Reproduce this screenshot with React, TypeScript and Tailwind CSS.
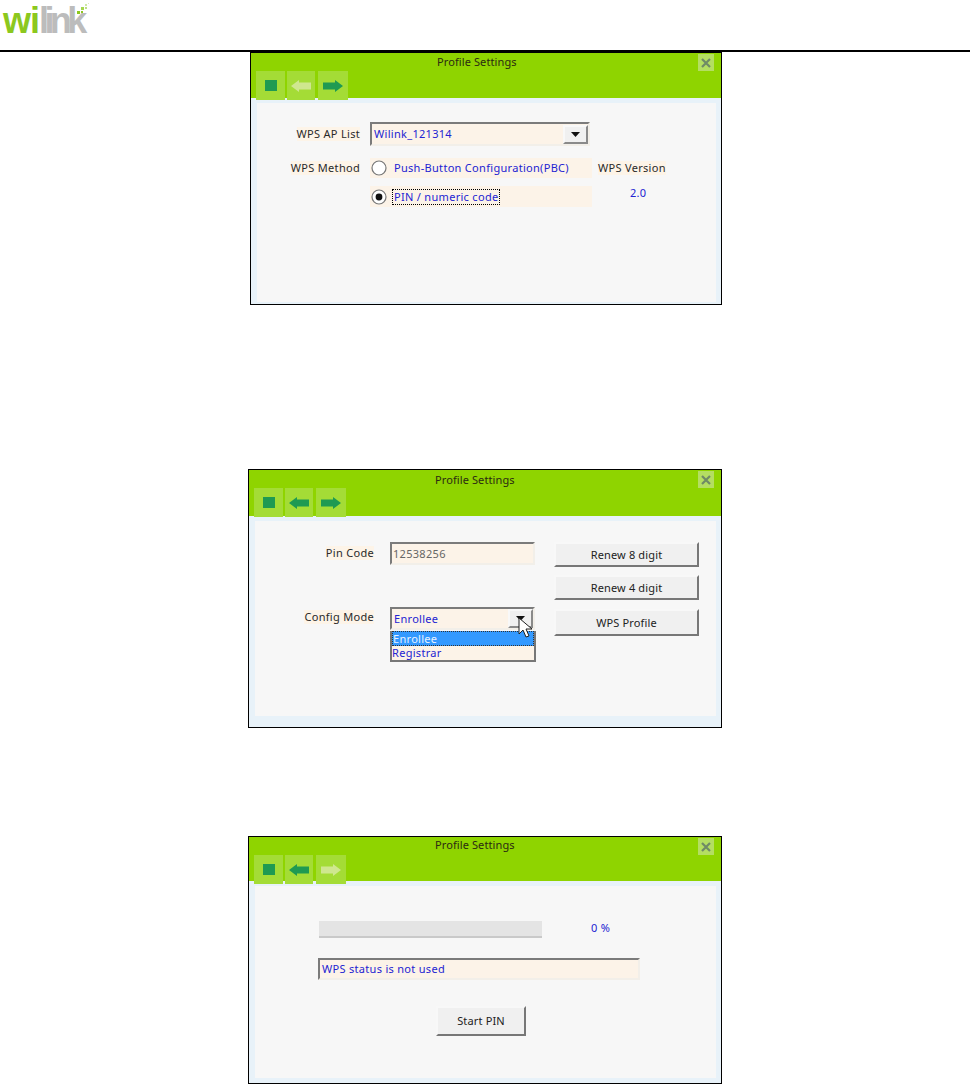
import type { ReactNode } from 'react';

const FONT = "font-['Noto_Sans',sans-serif] text-[11px] leading-[14px] tracking-[0.3px]";
const BLUE = 'text-[#2323d2]';
const GREEN_ON = '#1f9a52';
const GREEN_OFF = '#cfe78f';

function Logo() {
  return (
    <div className="relative h-[50px] w-[100px] pl-[3px]">
      <div className="font-['Liberation_Sans',sans-serif] text-[36px] font-bold leading-[42px]">
        <span className="tracking-[-1px] text-[#8cc81e]">wi</span>
        <span className="tracking-[-4.6px] text-[#bcbcbc]">link</span>
      </div>
      <svg className="absolute left-[74px] top-[2px]" width="16" height="14" viewBox="0 0 16 14">
        <rect x="3" y="9" width="3" height="3" fill="#8cc81e" />
        <rect x="7" y="9" width="2" height="2" fill="#8cc81e" />
        <rect x="7" y="5" width="3" height="3" fill="#a5d74e" />
        <rect x="11" y="5" width="2" height="2" fill="#bcdf83" />
        <rect x="11" y="2" width="2" height="2" fill="#cfe8a5" />
        <rect x="14" y="1" width="1" height="1" fill="#dcefc0" />
      </svg>
    </div>
  );
}

function ToolButton({ children, className = 'w-[29px]' }: { children: ReactNode; className?: string }) {
  return <div className={`flex h-[29px] items-center justify-center bg-[#a4dc36] ${className}`}>{children}</div>;
}

function Arrow({ dir, on }: { dir: 'left' | 'right'; on: boolean }) {
  const d = dir === 'left' ? 'M0 6 L8 0 V2.5 H20 V9.5 H8 V12 Z' : 'M20 6 L12 0 V2.5 H0 V9.5 H12 V12 Z';
  return (
    <svg width="20" height="12" viewBox="0 0 20 12">
      <path d={d} fill={on ? GREEN_ON : GREEN_OFF} />
    </svg>
  );
}

function Window({
  className,
  head,
  titleTop,
  back,
  next,
  bottom,
  children,
}: {
  className: string;
  head: string;
  titleTop: string;
  back: boolean;
  next: boolean;
  bottom: string;
  children: ReactNode;
}) {
  return (
    <div className={`flex flex-col border border-black bg-[#e8f2f9] ${FONT} ${className}`}>
      <div className={`flex shrink-0 flex-col justify-between bg-[#8fd400] ${head}`}>
        <div className="flex items-start">
          <div className={`ml-[186px] tracking-[0.1px] text-[#2b2b12] ${titleTop}`}>Profile Settings</div>
          <div className="ml-auto mr-[7px] mt-[1px] flex h-[17px] w-[16px] items-center justify-center bg-[#b4de62]">
            <svg width="10" height="10" viewBox="0 0 10 10">
              <path d="M1 1 L9 9 M9 1 L1 9" stroke="#6f8a66" strokeWidth="2.2" />
            </svg>
          </div>
        </div>
        <div className="ml-[5px] flex gap-[2px]">
          <ToolButton>
            <div className="h-[11px] w-[12px] bg-[#1f9a52]" />
          </ToolButton>
          <ToolButton className="w-[28px]">
            <Arrow dir="left" on={back} />
          </ToolButton>
          <ToolButton className="ml-[1px] w-[30px]">
            <Arrow dir="right" on={next} />
          </ToolButton>
        </div>
      </div>
      <div className={`flex min-h-0 flex-1 flex-col pl-[6px] pr-[5px] pt-[5px] ${bottom}`}>
        <div className="relative flex-1 bg-[#f7f7f7]">{children}</div>
      </div>
    </div>
  );
}

function Label({ children, width }: { children: ReactNode; width: string }) {
  return (
    <div className={`flex shrink-0 justify-end ${width}`}>
      <span className="bg-[#fdf4e8] text-[#2a2a2a]">{children}</span>
    </div>
  );
}

function Sunken({ children, className }: { children?: ReactNode; className: string }) {
  return (
    <div className={`flex items-center border-2 border-[#f2efe9] border-l-[#7b7b7b] border-t-[#7b7b7b] bg-[#fcf3e8] ${className}`}>
      {children}
    </div>
  );
}

function Raised({ children, className }: { children: ReactNode; className: string }) {
  return (
    <div className={`flex items-center justify-center border-2 border-[#f8f8f8] border-b-[#777777] border-r-[#777777] bg-[#f0f0f0] tracking-[0.15px] text-[#222222] ${className}`}>
      {children}
    </div>
  );
}

function Combo({ value, className }: { value: string; className: string }) {
  return (
    <Sunken className={`justify-between pl-[2px] ${BLUE} ${className}`}>
      <span>{value}</span>
      <div className="flex h-[19px] w-[25px] items-center justify-center border-2 border-[#f8f8f8] border-b-[#8a8a8a] border-r-[#8a8a8a] bg-[#f0f0f0]">
        <svg width="9" height="5" viewBox="0 0 9 5">
          <path d="M0 0 H9 L4.5 5 Z" fill="#111111" />
        </svg>
      </div>
    </Sunken>
  );
}

function Radio({ checked }: { checked: boolean }) {
  return (
    <svg className="shrink-0" width="16" height="16" viewBox="0 0 16 16">
      <circle cx="8" cy="8" r="7" fill="#ffffff" stroke="#777777" strokeWidth="1.2" />
      {checked && <circle cx="8" cy="8" r="3.4" fill="#111111" />}
    </svg>
  );
}

function Cursor() {
  return (
    <svg className="absolute left-[263px] top-[96px]" width="16" height="22" viewBox="0 0 16 22">
      <path d="M1 1 V17 L5 13 L8 20 L11 19 L8 12 L14 12 Z" fill="#ffffff" stroke="#222222" strokeWidth="1" />
    </svg>
  );
}

export default function App() {
  return (
    <div className="h-[1084px] w-[970px] overflow-hidden bg-white">
      <Logo />
      <div className="h-[2px] bg-black" />

      <Window className="ml-[250px] h-[253px] w-[472px]" head="h-[45px]" titleTop="mt-[2px]" back={false} next={true} bottom="pb-[2px]">
        <div className="flex items-center pt-[19px]">
          <Label width="w-[103px]">WPS AP List</Label>
          <Combo value="Wilink_121314" className="ml-[10px] h-[24px] w-[220px]" />
        </div>
        <div className="mt-[12px] flex h-[20px] items-center">
          <Label width="w-[103px]">WPS Method</Label>
          <div className={`ml-[10px] flex h-[20px] w-[222px] items-center bg-[#fcf3e8] pl-[1px] ${BLUE}`}>
            <Radio checked={false} />
            <span className="ml-[7px]">Push-Button Configuration(PBC)</span>
          </div>
          <span className="ml-[6px] bg-[#fdf4e8] text-[#2a2a2a]">WPS Version</span>
        </div>
        <div className="mt-[8px] flex h-[21px] items-start pl-[113px]">
          <div className={`flex h-[21px] w-[222px] items-center bg-[#fcf3e8] pl-[1px] ${BLUE}`}>
            <Radio checked={true} />
            <span className="ml-[5px] border border-dotted border-black px-[1px]">PIN / numeric code</span>
          </div>
          <span className={`ml-[38px] ${BLUE}`}>2.0</span>
        </div>
      </Window>

      <Window className="ml-[248px] mt-[164px] h-[259px] w-[474px]" head="h-[46px]" titleTop="mt-[3px]" back={true} next={true} bottom="pb-[11px]">
        <div className="flex items-start pt-[21px]">
          <div className="w-[135px] pt-[4px]">
            <Label width="w-[119px]">Pin Code</Label>
            <div className="h-[50px]" />
            <Label width="w-[119px]">Config Mode</Label>
          </div>
          <div className="w-[164px]">
            <Sunken className="h-[23px] w-[145px] pl-[1px] text-[#666666]">12538256</Sunken>
            <Combo value="Enrollee" className="mt-[42px] h-[23px] w-[145px]" />
            <div className={`mt-[1px] h-[31px] w-[146px] border-2 border-t-0 border-[#777777] bg-[#fcf3e8] ${BLUE}`}>
              <div className="h-[15px] border border-dotted border-[#333333] bg-[#3399ff] text-[#e8f2ff]">Enrollee</div>
              <div className="h-[14px]">Registrar</div>
            </div>
          </div>
          <div className="flex w-[145px] flex-col">
            <Raised className="h-[25px]">Renew 8 digit</Raised>
            <Raised className="mt-[8px] h-[25px]">Renew 4 digit</Raised>
            <Raised className="mt-[9px] h-[27px]">WPS Profile</Raised>
          </div>
        </div>
        <Cursor />
      </Window>

      <Window className="ml-[248px] mt-[108px] h-[248px] w-[474px]" head="h-[44px]" titleTop="mt-[1px]" back={true} next={false} bottom="pb-[5px]">
        <div className="pl-[63px] pt-[35px]">
          <div className="ml-[1px] flex items-start">
            <div className="h-[17px] w-[223px] border-b-2 border-[#c9c9c9] bg-[#e4e4e4]" />
            <span className={`ml-[49px] ${BLUE}`}>0 %</span>
          </div>
          <Sunken className={`mt-[20px] h-[22px] w-[322px] pl-[2px] ${BLUE}`}>WPS status is not used</Sunken>
          <Raised className="ml-[118px] mt-[26px] h-[30px] w-[90px]">Start PIN</Raised>
        </div>
      </Window>
    </div>
  );
}
